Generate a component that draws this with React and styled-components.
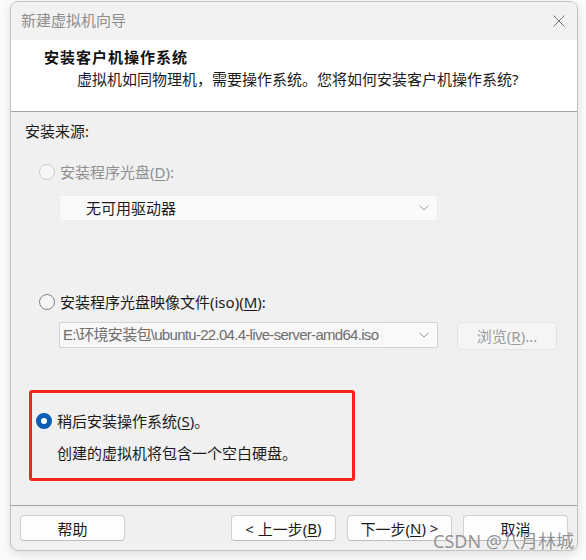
import styled, { createGlobalStyle } from 'styled-components';

const GlobalStyle = createGlobalStyle`
  body {
    margin: 0;
    background: #fbfbfb;
    font-family: "Segoe UI", "Noto Sans", "Noto Sans CJK SC", sans-serif;
    font-size: 15px;
    color: #1b1b1b;
  }
`;

function Radio({ state }) {
  return <S.RadioDot state={state} />;
}

function Chevron() {
  return (
    <S.ChevronIcon width="10" height="6" viewBox="0 0 10 6">
      <path d="M0.5 0.5 L5 5 L9.5 0.5" fill="none" stroke="#9a9a9a" strokeWidth="1" />
    </S.ChevronIcon>
  );
}

function App() {
  return (
    <S.Page>
      <GlobalStyle />
      <S.Window>
        <S.TitleBar>
          <S.Title>新建虚拟机向导</S.Title>
          <S.CloseIcon width="12" height="12" viewBox="0 0 12 12">
            <path d="M0.5 0.5 L11.5 11.5 M11.5 0.5 L0.5 11.5" stroke="#6f6f6f" strokeWidth="1" />
          </S.CloseIcon>
        </S.TitleBar>

        <S.Header>
          <S.Heading>安装客户机操作系统</S.Heading>
          <S.SubHeading>虚拟机如同物理机，需要操作系统。您将如何安装客户机操作系统?</S.SubHeading>
        </S.Header>

        <S.Body>
          <S.SectionLabel>安装来源:</S.SectionLabel>

          <S.RadioRow mt={'21px'} disabled>
            <Radio state="disabled" />
            <span>
              安装程序光盘(<S.Key>D</S.Key>):
            </span>
          </S.RadioRow>
          <S.Combo mt={'13px'} pl={'26px'}>
            <S.ComboText>无可用驱动器</S.ComboText>
            <Chevron />
          </S.Combo>

          <S.RadioRow mt={'71px'}>
            <Radio state="off" />
            <span>
              安装程序光盘映像文件(iso)(<S.Key>M</S.Key>):
            </span>
          </S.RadioRow>
          <S.IsoRow>
            <S.Combo bordered pl={'3px'}>
              <S.IsoText>E:\环境安装包\ubuntu-22.04.4-live-server-amd64.iso</S.IsoText>
              <Chevron />
            </S.Combo>
            <S.BrowseButton>
              浏览(<S.Key>R</S.Key>)...
            </S.BrowseButton>
          </S.IsoRow>

          <S.Highlight>
            <S.RadioRow>
              <Radio state="on" />
              <span>
                稍后安装操作系统(<S.Key>S</S.Key>)。
              </span>
            </S.RadioRow>
            <S.Note>创建的虚拟机将包含一个空白硬盘。</S.Note>
          </S.Highlight>
        </S.Body>

        <S.Footer>
          <S.Button>帮助</S.Button>
          <S.Spacer />
          <S.Button>
            &lt; 上一步(<S.Key>B</S.Key>)
          </S.Button>
          <S.Button>
            下一步(<S.Key>N</S.Key>) &gt;
          </S.Button>
          <S.Button>取消</S.Button>
        </S.Footer>
      </S.Window>
      <S.Watermark>CSDN @八月林城</S.Watermark>
    </S.Page>
  );
}
export default App;

const Page = styled.div`
  position: relative;
  width: 586px;
  height: 560px;
  padding: 1px 8px 0 10px;
  box-sizing: border-box;
`;

const Window = styled.div`
  width: 568px;
  height: 550px;
  box-sizing: border-box;
  border: 1px solid #c2c2c2;
  border-radius: 8px;
  overflow: hidden;
  display: flex;
  flex-direction: column;
  background: #f0f0f0;
  box-shadow: 0 3px 10px rgba(0, 0, 0, 0.12);
`;

const TitleBar = styled.div`
  height: 38px;
  flex-shrink: 0;
  box-sizing: border-box;
  display: flex;
  align-items: center;
  justify-content: space-between;
  padding: 0 0 3px 10px;
  background: #f2f2f2;
`;

const Title = styled.div`
  color: #8e8e8e;
  font-size: 15px;
`;

const CloseIcon = styled.svg`
  margin: 2px 12px 0 0;
`;

const Header = styled.div`
  height: 72px;
  flex-shrink: 0;
  box-sizing: border-box;
  background: #ffffff;
  border-bottom: 1px solid #a3a3a3;
  padding: 7px 0 0 33px;
  line-height: 20px;
`;

const Heading = styled.div`
  font-weight: bold;
  letter-spacing: 1px;
  color: #111;
`;

const SubHeading = styled.div`
  margin-top: 2px;
  padding-left: 33px;
  color: #1b1b1b;
`;

const Body = styled.div`
  flex: 1;
  display: flex;
  flex-direction: column;
  align-items: flex-start;
  line-height: 20px;
`;

const SectionLabel = styled.div`
  margin: 9px 0 0 14px;
`;

const RadioRow = styled.div`
  display: flex;
  align-items: center;
  gap: 5px;
  height: 20px;
  margin-top: ${({ mt }) => mt || '0'};
  padding-left: 28px;
  color: ${({ disabled }) => (disabled ? '#8f8f8f' : '#1b1b1b')};
`;

const RadioDot = styled.span`
  width: 16px;
  height: 16px;
  box-sizing: border-box;
  border-radius: 50%;
  flex-shrink: 0;
  background: ${({ state }) => (state === 'on' ? '#ffffff' : '#f6f6f6')};
  border: ${({ state }) =>
    state === 'on' ? '5px solid #0a5fb4' : state === 'off' ? '1px solid #858585' : '1px solid #cdcdcd'};
`;

const Key = styled.span`
  text-decoration: underline;
  text-underline-offset: 2px;
`;

const Combo = styled.div`
  width: 379px;
  height: 26px;
  box-sizing: border-box;
  margin: ${({ mt }) => mt || '0'} 0 0 48px;
  padding: 0 8px 0 ${({ pl }) => pl};
  display: flex;
  align-items: center;
  justify-content: space-between;
  background: #fafafa;
  border: 1px solid ${({ bordered }) => (bordered ? '#d2d2d2' : '#ececec')};
  border-radius: 2px;
`;

const ComboText = styled.span`
  color: #1b1b1b;
`;

const IsoText = styled.span`
  background: #f7f7f7;
  color: #6e6e6e;
  font-family: "Liberation Sans", "Noto Sans CJK SC", sans-serif;
  font-size: 15px;
  letter-spacing: -0.7px;
  padding-right: 6px;
`;

const ChevronIcon = styled.svg`
  flex-shrink: 0;
`;

const IsoRow = styled.div`
  display: flex;
  align-items: flex-start;
  gap: 19px;
  margin-top: 10px;
`;

const BrowseButton = styled.div`
  width: 100px;
  height: 28px;
  box-sizing: border-box;
  display: flex;
  align-items: center;
  justify-content: center;
  background: #f5f5f5;
  border: 1px solid #e3e3e3;
  border-radius: 4px;
  color: #9c9c9c;
`;

const Highlight = styled.div`
  width: 326px;
  height: 91px;
  box-sizing: border-box;
  margin: 40px 0 0 18px;
  padding-top: 18px;
  border: 3px solid #f5241c;
  border-radius: 3px;

  ${RadioRow} {
    padding-left: 4px;
  }
`;

const Note = styled.div`
  margin: 12px 0 0 25px;
`;

const Footer = styled.div`
  height: 45px;
  flex-shrink: 0;
  box-sizing: border-box;
  border-top: 1px solid #a3a3a3;
  padding: 9px 9px 0 9px;
  display: flex;
  align-items: flex-start;
  gap: 11px;
`;

const Spacer = styled.div`
  flex: 1;
`;

const Button = styled.div`
  width: 105px;
  height: 26px;
  box-sizing: border-box;
  display: flex;
  align-items: center;
  justify-content: center;
  background: #fdfdfd;
  border: 1px solid #d0d0d0;
  border-bottom-color: #bdbdbd;
  border-radius: 4px;
  color: #1b1b1b;
`;

const Watermark = styled.div`
  position: absolute;
  right: 12px;
  top: 529px;
  font-family: "Noto Sans", "Noto Sans CJK SC", sans-serif;
  font-size: 18px;
  line-height: 24px;
  color: rgba(110, 110, 110, 0.75);
  text-shadow: 0 0 1px rgba(255, 255, 255, 0.8);
`;

const S = {
  Page,
  Window,
  TitleBar,
  Title,
  CloseIcon,
  Header,
  Heading,
  SubHeading,
  Body,
  SectionLabel,
  RadioRow,
  RadioDot,
  Key,
  Combo,
  ComboText,
  IsoText,
  ChevronIcon,
  IsoRow,
  BrowseButton,
  Highlight,
  Note,
  Footer,
  Spacer,
  Button,
  Watermark,
};
